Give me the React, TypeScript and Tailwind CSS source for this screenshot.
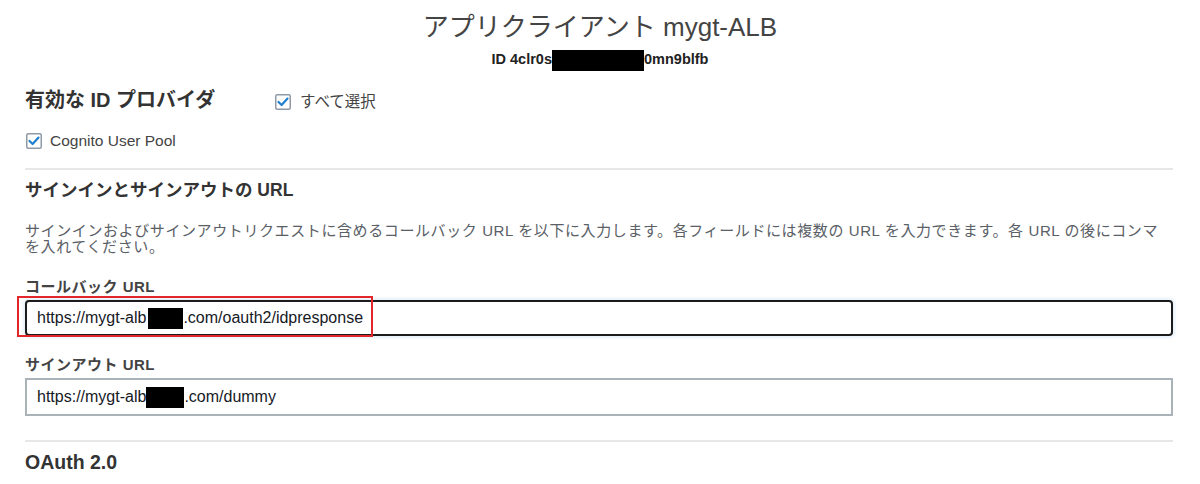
import React from "react";

function Check() {
  return (
    <svg width="16" height="16" viewBox="0 0 16 16" className="shrink-0">
      <rect x="0.75" y="0.75" width="14.5" height="14.5" rx="1.5" fill="#fff" stroke="#8f9aa6" strokeWidth="1.5" />
      <path d="M3.5 8 L6.6 11 L12.5 4.6" fill="none" stroke="#1f7fcf" strokeWidth="2.2" strokeLinecap="round" strokeLinejoin="round" />
    </svg>
  );
}

function Redact({ w, h }: { w: number; h: number }) {
  return <span className="inline-block bg-black align-middle" style={{ width: w, height: h }} />;
}

export default function App() {
  return (
    <div className="w-[1200px] h-[484px] overflow-hidden bg-white font-['Liberation_Sans','Noto_Sans_CJK_JP',sans-serif] text-[#333]">
      {/* header */}
      <div className="mt-[8px] h-[38px] flex items-center justify-center text-[26px] text-[#444]">
        アプリクライアント mygt-ALB
      </div>
      <div className="mt-[4px] h-[20px] flex items-center justify-center text-[14.5px] font-bold text-[#222]">
        <span>ID 4clr0s</span>
        <span className="inline-block w-[92px] h-[21px] bg-black" />
        <span>0mn9blfb</span>
      </div>

      <div className="px-[25px] pr-[27px]">
        {/* providers */}
        <div className="mt-[16px] h-[28px] flex items-center">
          <h2 className="w-[250px] text-[20px] font-bold text-[#333]">有効な ID プロバイダ</h2>
          <label className="flex items-center gap-[9px] mt-[3px] text-[15.5px] text-[#444]">
            <Check />
            すべて選択
          </label>
        </div>
        <label className="mt-[16px] h-[22px] flex items-center gap-[8px] pl-[1px] text-[15.5px] text-[#444]">
          <Check />
          Cognito User Pool
        </label>

        <div className="mt-[16px] h-[2px] bg-[#e6e8e8]" />

        {/* sign in / out */}
        <h2 className="mt-[8px] h-[24px] flex items-center text-[17.5px] font-bold text-[#333]">
          サインインとサインアウトの URL
        </h2>
        <p className="mt-[21px] text-[15px] tracking-[0.6px] leading-[16px] text-[#5a6066]">
          サインインおよびサインアウトリクエストに含めるコールバック URL を以下に入力します。各フィールドには複数の URL を入力できます。各 URL の後にコンマ
          <br />
          を入れてください。
        </p>

        <div className="mt-[22px] h-[20px] flex items-center text-[15px] tracking-[0.5px] font-bold text-[#444]">
          コールバック URL
        </div>
        <div className="relative mt-[3px]">
          <div className="h-[36px] flex items-center pl-[10px] border-2 border-[#1b1b1b] rounded-[4px] bg-white shadow-[0_0_3px_2px_rgba(110,170,230,0.18)] text-[16px] text-[#16191f]">
            <span>https://mygt-alb</span>
            <span className="ml-[2px]"><Redact w={35} h={21} /></span>
            <span>.com/oauth2/idpresponse</span>
          </div>
          <div className="absolute left-[-8px] top-[-4px] w-[356px] h-[41px] border-2 border-[#e3262b] pointer-events-none" />
        </div>

        <div className="mt-[19px] h-[20px] flex items-center text-[15px] tracking-[0.5px] font-bold text-[#444]">
          サインアウト URL
        </div>
        <div className="mt-[3px] h-[38px] flex items-center pl-[10px] border-2 border-[#aab3b8] bg-white text-[16px] text-[#16191f]">
          <span>https://mygt-alb</span>
          <span><Redact w={38} h={21} /></span>
          <span>.com/dummy</span>
        </div>

        <div className="mt-[24px] h-[2px] bg-[#e6e8e8]" />

        <h2 className="mt-[9px] h-[24px] flex items-center text-[19.5px] font-bold text-[#333]">OAuth 2.0</h2>
      </div>
    </div>
  );
}
